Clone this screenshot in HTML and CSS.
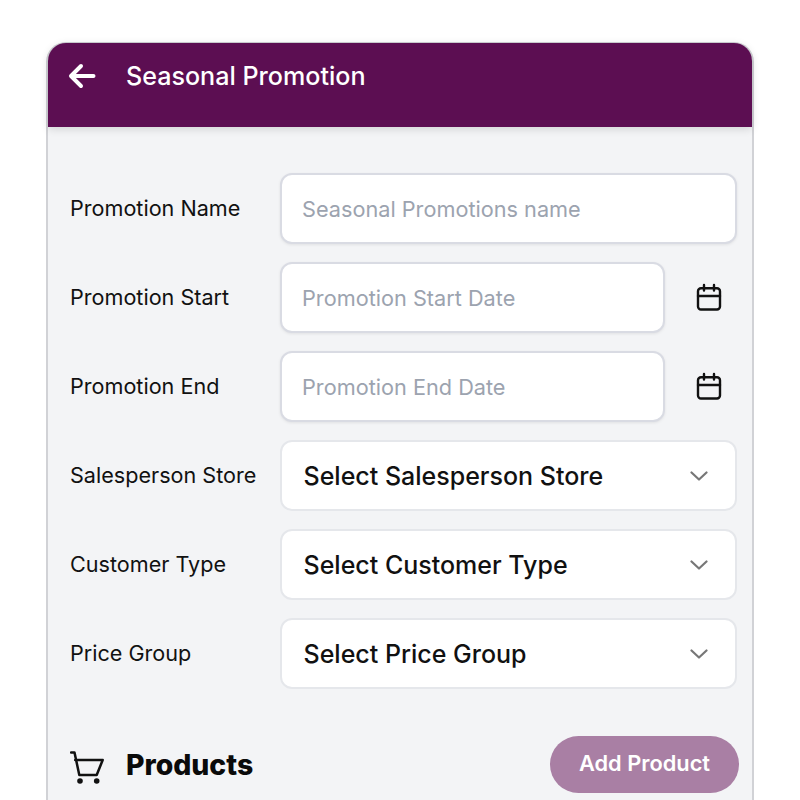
FILE: index.html
```html
<!DOCTYPE html>
<html lang="en">
<head>
<meta charset="utf-8">
<title>Seasonal Promotion</title>
<link rel="stylesheet" href="styles.css">
</head>
<body>
<main class="card">
  <header class="topbar">
    <svg class="back" viewBox="0 0 28 26" width="28" height="26" aria-hidden="true"><path d="M25.5 13H4M13 3 3 13l10 10" fill="none" stroke="#fff" stroke-width="4" stroke-linecap="round" stroke-linejoin="round"/></svg>
    <h1 class="title">Seasonal Promotion</h1>
  </header>
  <div class="body">
    <form class="form">
      <div class="row">
        <span class="label">Promotion Name</span>
        <div class="field"><span class="placeholder">Seasonal Promotions name</span></div>
      </div>
      <div class="row">
        <span class="label">Promotion Start</span>
        <div class="field short"><span class="placeholder">Promotion Start Date</span></div>
        <span class="cal"><svg viewBox="0 0 26 28" width="26" height="28" aria-hidden="true"><g fill="none" stroke="#111" stroke-width="2.4" stroke-linecap="round" stroke-linejoin="round"><rect x="2" y="5.2" width="22" height="21.300" rx="3"/><path d="M2 13h22M8 2v5.500M18 2v5.500"/></g></svg></span>
      </div>
      <div class="row">
        <span class="label">Promotion End</span>
        <div class="field short"><span class="placeholder">Promotion End Date</span></div>
        <span class="cal"><svg viewBox="0 0 26 28" width="26" height="28" aria-hidden="true"><g fill="none" stroke="#111" stroke-width="2.4" stroke-linecap="round" stroke-linejoin="round"><rect x="2" y="5.2" width="22" height="21.300" rx="3"/><path d="M2 13h22M8 2v5.500M18 2v5.500"/></g></svg></span>
      </div>
      <div class="row">
        <span class="label">Salesperson Store</span>
        <div class="field select"><span class="value">Select Salesperson Store</span><svg class="chev" viewBox="0 0 18 10" width="18" height="10" aria-hidden="true"><path d="M1.5 1.5 9 8.5l7.5-7" fill="none" stroke="#777" stroke-width="2.2" stroke-linecap="round" stroke-linejoin="round"/></svg></div>
      </div>
      <div class="row">
        <span class="label">Customer Type</span>
        <div class="field select"><span class="value">Select Customer Type</span><svg class="chev" viewBox="0 0 18 10" width="18" height="10" aria-hidden="true"><path d="M1.5 1.5 9 8.5l7.5-7" fill="none" stroke="#777" stroke-width="2.2" stroke-linecap="round" stroke-linejoin="round"/></svg></div>
      </div>
      <div class="row">
        <span class="label">Price Group</span>
        <div class="field select"><span class="value">Select Price Group</span><svg class="chev" viewBox="0 0 18 10" width="18" height="10" aria-hidden="true"><path d="M1.5 1.5 9 8.5l7.5-7" fill="none" stroke="#777" stroke-width="2.2" stroke-linecap="round" stroke-linejoin="round"/></svg></div>
      </div>
    </form>
    <section class="products">
      <div class="products-head">
        <svg class="cart" viewBox="0 0 34 34" width="34" height="34" aria-hidden="true"><path d="M1 2.500h3.500l4.800 22.500h17.400l6-15H5.200" fill="none" stroke="#111" stroke-width="2.500" stroke-linecap="round" stroke-linejoin="round"/><circle cx="10" cy="31" r="2.800" fill="#111"/><circle cx="26.700" cy="31" r="2.800" fill="#111"/></svg>
        <h2 class="products-title">Products</h2>
      </div>
      <button class="add" type="button">Add Product</button>
    </section>
  </div>
</main>
</body>
</html>
```

FILE: styles.css
```css
* { box-sizing: border-box; }
html, body { margin: 0; height: 800px; overflow: hidden; background: #fff; }
body { font-family: Inter, "Noto Sans", sans-serif; color: #111; padding: 42px 46px 0 46px; }
.card {
  height: 758px;
  background: #f3f4f6;
  border: 2px solid #d1d2d6;
  border-top-width: 1.5px;
  border-bottom: 0;
  border-radius: 20px 20px 0 0;
}
.topbar {
  height: 83.5px;
  padding: 0 0 18px 20px;
  background: #5c0e52;
  border-radius: 18px 18px 0 0;
  display: flex;
  align-items: center;
  gap: 30px;
  box-shadow: 0 2px 8px rgba(0,0,0,.14);
}
.back { flex: none; }
.title { margin: 0; font-size: 25.100px; font-weight: 500; color: #fff; }
.body { padding: 46px 15px 0 22px; }
.form { display: flex; flex-direction: column; gap: 18px; }
.row { display: flex; align-items: center; height: 71px; }
.label { flex: none; width: 210px; font-size: 21.600px; font-weight: 400; color: #111; }
.field {
  flex: 1;
  height: 71px;
  background: #fff;
  border: 2px solid #d9dbe3;
  border-radius: 12px;
  display: flex;
  align-items: center;
  padding: 2px 20px 0;
  box-shadow: 0 1px 3px rgba(0,0,0,.08);
}
.placeholder { font-size: 21.700px; color: #9ca3af; }
.short { flex: none; width: 385px; }
.cal { flex: none; width: 72px; padding-left: 16px; display: flex; justify-content: center; }
.select { border-color: #e5e7eb; box-shadow: none; justify-content: space-between; padding: 1px 27px 0 21.500px; }
.value { font-size: 25px; font-weight: 500; color: #111; }
.chev { flex: none; }
.products { margin: 47px -2px 0 0; display: flex; align-items: center; justify-content: space-between; }
.products-head { display: flex; align-items: center; gap: 22px; }
.cart { flex: none; margin-top: 5px; }
.products-title { margin: 0; font-size: 28.400px; font-weight: 800; color: #0a0a0a; }
.add {
  width: 189px;
  height: 57px;
  border: 0;
  border-radius: 29px;
  padding: 0 0 2px;
  background: #a97fa4;
  color: #fff;
  font: 600 21.800px Inter, "Noto Sans", sans-serif;
}
```
